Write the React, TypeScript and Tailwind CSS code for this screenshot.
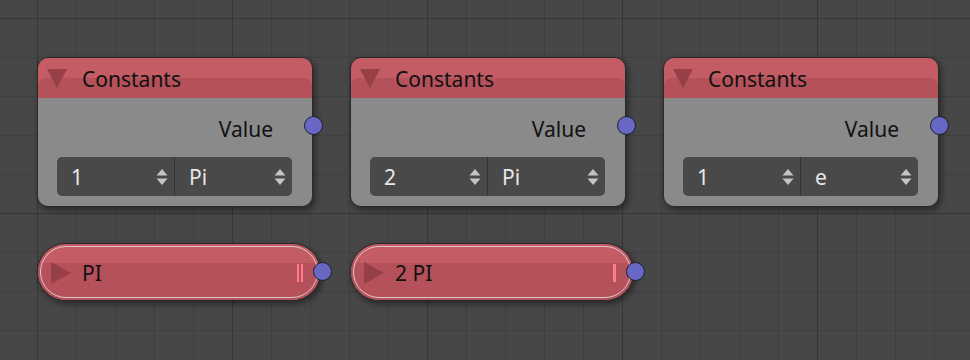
import React from "react";

const font = { fontFamily: '"Noto Sans", "Open Sans", sans-serif' };

function Grid() {
  const xs: number[] = [];
  for (let x = -2; x < 980; x += 39) xs.push(x);
  const ys: number[] = [];
  for (let y = 18; y < 370; y += 39) ys.push(y);
  return (
    <svg className="absolute inset-0" width={970} height={360}>
      {xs.map((x, i) => (
        <line key={"x" + i} x1={x + 0.5} y1={0} x2={x + 0.5} y2={360} stroke={(i - 1) % 5 === 0 ? "#363636" : "#3f3f3f"} strokeWidth={1} />
      ))}
      {ys.map((y, i) => (
        <line key={"y" + i} x1={0} y1={y + 0.5} x2={970} y2={y + 0.5} stroke={i % 5 === 0 ? "#363636" : "#3f3f3f"} strokeWidth={1} />
      ))}
    </svg>
  );
}

function Arrows() {
  return (
    <svg width="12" height="18" viewBox="0 0 12 18">
      <path d="M6 1 L11.5 7.5 L0.5 7.5 Z" fill="#c4c4c4" />
      <path d="M6 17 L11.5 10.5 L0.5 10.5 Z" fill="#c4c4c4" />
    </svg>
  );
}

function Socket({ className }: { className: string }) {
  return <div className={"absolute h-[19px] w-[19px] rounded-full border border-[#1e1e2e] bg-[#6767c4] " + className} />;
}

function ConstNode({ left, a, b }: { left: string; a: string; b: string }) {
  return (
    <div className={"absolute top-[57px] w-[276px] " + left}>
      <div className="rounded-[11px] border border-[#2a2a2a] shadow-[2px_3px_6px_rgba(0,0,0,0.45)]">
        <div className="relative h-[40px] overflow-hidden rounded-t-[10px] bg-[#c35c65]">
          <div className="absolute inset-x-0 bottom-0 top-[20px] rounded-t-[8px] bg-[#b4515a]" />
          <div className="relative flex h-full items-center">
            <svg className="ml-[9px] mt-[2px]" width="20" height="20" viewBox="0 0 20 20">
              <path d="M0 0 L20 0 L10 19 Z" fill="#973f47" />
            </svg>
            <span className="ml-[15px] mt-[3px] text-[21px] leading-none text-[#111]">Constants</span>
          </div>
        </div>
        <div className="h-[108px] rounded-b-[10px] bg-[#8a8a8a] pt-[19px]">
          <div className="flex h-[24px] items-center justify-end pr-[39px] text-[21px] leading-none text-[#111]">Value</div>
          <div className="ml-[19px] mr-[20px] mt-[16px] flex h-[39px] rounded-[5px] bg-[#494949] text-[21px] leading-none text-[#e8e8e8]">
            <div className="flex flex-1 items-center justify-between border-r border-[#333] pl-[14px] pr-[6px]">
              <span className="mt-[2px]">{a}</span>
              <Arrows />
            </div>
            <div className="flex flex-1 items-center justify-between pl-[14px] pr-[6px]">
              <span className="mt-[2px]">{b}</span>
              <Arrows />
            </div>
          </div>
        </div>
      </div>
      <Socket className="right-[-10px] top-[59px]" />
    </div>
  );
}

function Collapsed({ left, label, double }: { left: string; label: string; double: boolean }) {
  return (
    <div className={"absolute top-[243px] h-[58px] w-[284px] " + left}>
      <div className="relative h-full overflow-hidden rounded-full border border-[#2a2a2a] bg-[#c35c65] shadow-[2px_3px_6px_rgba(0,0,0,0.45)]">
        <div className="absolute inset-x-0 bottom-0 top-[19px] bg-[#b4515a]" />
        <div className="absolute inset-[2px] rounded-full border border-[#dcc8c8]" />
        <div className="relative flex h-full items-center">
          <svg className="ml-[13px] mt-[1px]" width="20" height="22" viewBox="0 0 20 22">
            <path d="M0 0 L20 11 L0 22 Z" fill="#973f47" />
          </svg>
          <span className="ml-[11px] mt-[3px] text-[21px] leading-none text-[#111]">{label}</span>
          <div className="ml-auto mr-[17px] mt-[1px] flex gap-[2px]">
            {double ? (
              <>
                <div className="h-[18px] w-[2px] bg-[#ff7d88]" />
                <div className="h-[18px] w-[2px] bg-[#ff7d88]" />
              </>
            ) : (
              <div className="h-[18px] w-[3px] bg-[#ff7d88]" />
            )}
          </div>
        </div>
      </div>
      <Socket className="right-[-11px] top-[19px]" />
    </div>
  );
}

export default function App() {
  return (
    <div className="relative h-[360px] w-[970px] overflow-hidden bg-[#474747]" style={font}>
      <Grid />
      <ConstNode left="left-[37px]" a="1" b="Pi" />
      <ConstNode left="left-[350px]" a="2" b="Pi" />
      <ConstNode left="left-[663px]" a="1" b="e" />
      <Collapsed left="left-[37px]" label="PI" double={true} />
      <Collapsed left="left-[350px]" label="2 PI" double={false} />
    </div>
  );
}
